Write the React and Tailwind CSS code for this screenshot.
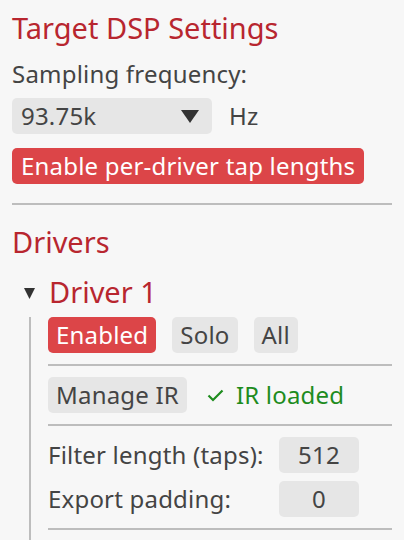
import { useState } from "react";

const Divider = () => <div className="h-[2px] bg-[#bdbdbd]" />;

const Pill = ({ active, children, className = "" }) => (
  <button
    className={
      "h-9 rounded-[5px] px-2 leading-9 " +
      (active ? "bg-[#dc4548] text-white " : "bg-[#e6e6e6] text-[#444] ") +
      className
    }
  >
    {children}
  </button>
);

const NumberBox = ({ value }) => (
  <div className="h-9 w-20 rounded-[5px] bg-[#e6e6e6] text-center leading-9">
    {value}
  </div>
);

export default function App() {
  const [open, setOpen] = useState(true);

  return (
    <div
      className="min-h-[540px] bg-[#f7f7f7] px-3 pt-[10px] text-[24px] tracking-[0.2px] text-[#444]"
      style={{ fontFamily: '"Noto Sans", sans-serif' }}
    >
      <h2 className="text-[29px] leading-9 tracking-normal text-[#b8262f]">Target DSP Settings</h2>

      <div className="mt-3 leading-8">Sampling frequency:</div>
      <div className="mt-2 flex items-center">
        <div className="flex h-9 w-[200px] items-center justify-between rounded-[5px] bg-[#e6e6e6] pl-[9px] pr-[13px]">
          <span>93.75k</span>
          <svg width="18" height="13" viewBox="0 0 18 13">
            <path d="M0 0H18L9 13Z" fill="#333" />
          </svg>
        </div>
        <span className="ml-[17px]">Hz</span>
      </div>

      <button className="mt-[14px] h-9 rounded-[5px] bg-[#dc4548] px-[9px] leading-9 text-white">
        Enable per-driver tap lengths
      </button>

      <div className="mt-[19px]">
        <Divider />
      </div>

      <h2 className="mt-[19px] text-[29px] leading-9 tracking-normal text-[#b8262f]">Drivers</h2>

      <div
        className="mt-[14px] flex cursor-pointer items-center"
        onClick={() => setOpen(!open)}
      >
        <svg width="11" height="11" viewBox="0 0 11 11" className="ml-3 mt-[2px]">
          <path d="M0 0H11L5.5 11Z" fill="#333" />
        </svg>
        <span className="ml-[14px] text-[29px] leading-9 tracking-normal text-[#b8262f]">Driver 1</span>
      </div>

      {open && (
        <div className="ml-[17px] mt-[7px] flex flex-col gap-[11px] border-l-2 border-[#bdbdbd] pl-[17px] pb-4">
          <div className="flex gap-4">
            <Pill active>Enabled</Pill>
            <Pill>Solo</Pill>
            <Pill>All</Pill>
          </div>
          <Divider />
          <div className="flex items-center">
            <Pill>Manage IR</Pill>
            <span className="ml-5 flex items-center text-[#1e8c1e]">
              <svg width="17" height="13" viewBox="0 0 17 13" className="mr-3">
                <path d="M1.5 6.5L6 11L15.5 1.5" stroke="#1e8c1e" strokeWidth="2.2" fill="none" />
              </svg>
              IR loaded
            </span>
          </div>
          <Divider />
          <div className="flex flex-col gap-2">
            <div className="flex items-center justify-between pr-[33px]">
              <span>Filter length (taps):</span>
              <NumberBox value="512" />
            </div>
            <div className="flex items-center justify-between pr-[33px]">
              <span>Export padding:</span>
              <NumberBox value="0" />
            </div>
          </div>
          <Divider />
        </div>
      )}
    </div>
  );
}
